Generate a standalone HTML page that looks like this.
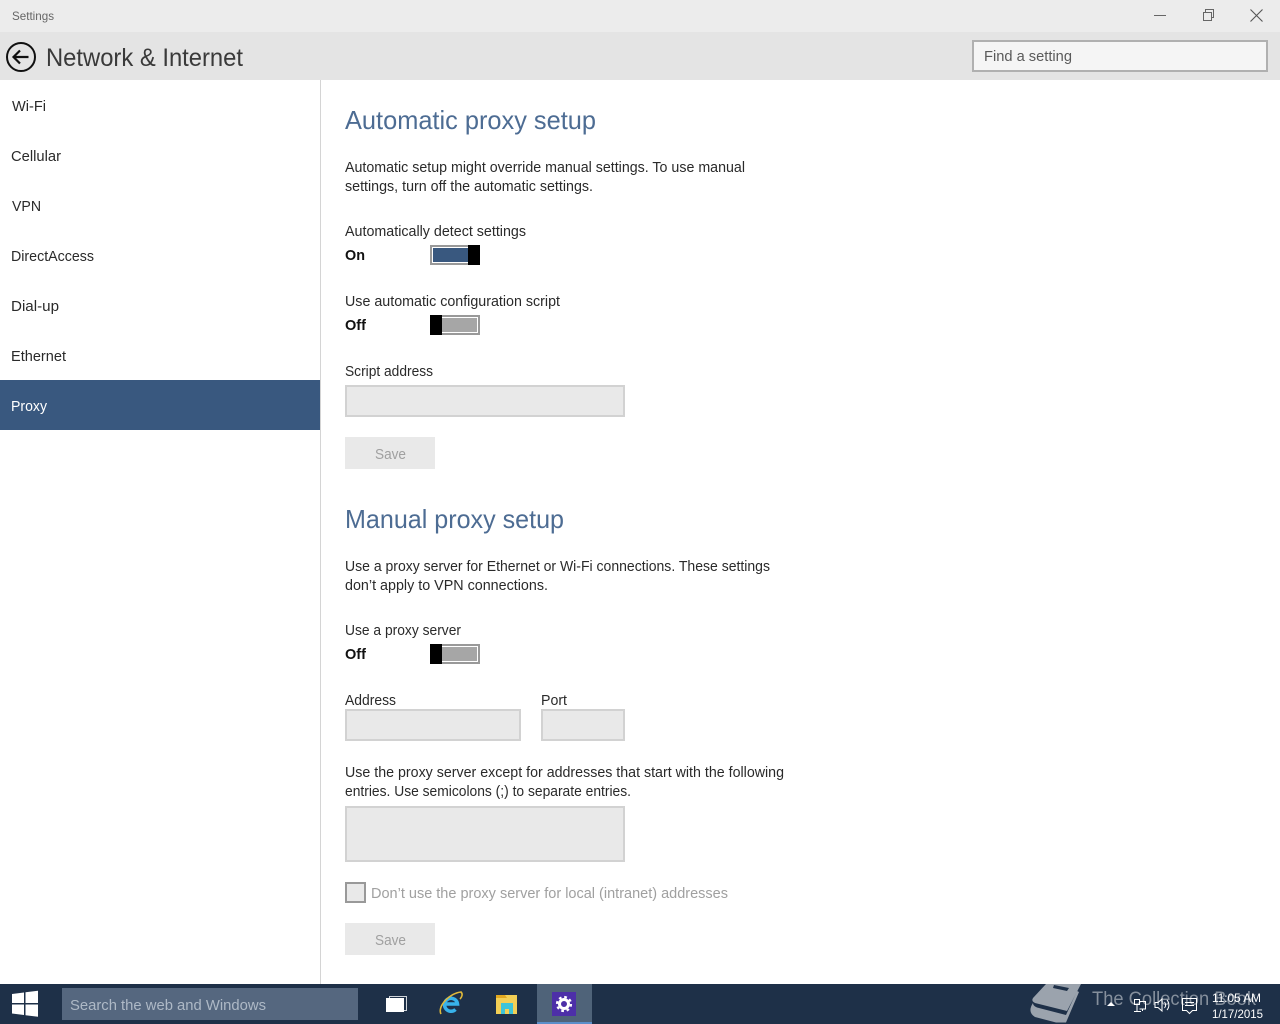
<!DOCTYPE html>
<html><head><meta charset="utf-8"><title>Settings</title>
<style>
html,body{margin:0;padding:0;background:#fff;width:1280px;height:1024px;overflow:hidden}
svg{display:block}
text{font-family:"Liberation Sans",sans-serif;font-size:15px;fill:#2a2a2a}
.h{font-size:26px;fill:#4d6c93}
.d{fill:#a0a0a0}
.b{font-weight:bold;fill:#111}
</style></head><body>
<svg width="1280" height="1024" viewBox="0 0 1280 1024" xmlns="http://www.w3.org/2000/svg">
<rect width="1280" height="1024" fill="#fff"/>
<rect width="1280" height="32" fill="#ececec"/>
<rect y="32" width="1280" height="48" fill="#e4e4e4"/>
<text x="12" y="20" style="font-size:12px;fill:#666" textLength="42" lengthAdjust="spacingAndGlyphs">Settings</text>
<path d="M1154 15.500h12" stroke="#666" fill="none"/>
<path d="M1203.500 12.500h8v8h-8zM1205.500 12.500v-3h8v8h-2" stroke="#666" fill="none"/>
<path d="M1250.500 9.500l12 12M1262.500 9.500l-12 12" stroke="#555" stroke-width="1.100" fill="none"/>
<circle cx="21" cy="57" r="14" fill="none" stroke="#111" stroke-width="2"/>
<path d="M13.500 57h15M20 50.500l-6.500 6.500 6.500 6.500" fill="none" stroke="#111" stroke-width="2.200"/>
<text x="46" y="66" style="font-size:25px;fill:#3a3a3a" textLength="197" lengthAdjust="spacingAndGlyphs">Network &amp; Internet</text>
<rect x="973" y="41" width="294" height="30" fill="#f5f5f5" stroke="#b0b0b0" stroke-width="2"/>
<text x="984" y="61" style="fill:#5a5a5a" textLength="88" lengthAdjust="spacingAndGlyphs">Find a setting</text>

<rect x="320" y="80" width="1" height="904" fill="#d4d4d4"/>
<rect y="380" width="320" height="50" fill="#39587f"/>
<text x="12" y="111" textLength="34" lengthAdjust="spacingAndGlyphs">Wi-Fi</text>
<text x="11" y="161" textLength="50" lengthAdjust="spacingAndGlyphs">Cellular</text>
<text x="12" y="211" textLength="29" lengthAdjust="spacingAndGlyphs">VPN</text>
<text x="11" y="261" textLength="83" lengthAdjust="spacingAndGlyphs">DirectAccess</text>
<text x="11" y="311" textLength="48" lengthAdjust="spacingAndGlyphs">Dial-up</text>
<text x="11" y="361" textLength="55" lengthAdjust="spacingAndGlyphs">Ethernet</text>
<text x="11" y="411" style="fill:#fff" textLength="36" lengthAdjust="spacingAndGlyphs">Proxy</text>

<text class="h" x="345" y="129" textLength="251" lengthAdjust="spacingAndGlyphs">Automatic proxy setup</text>
<text x="345" y="172" textLength="400" lengthAdjust="spacingAndGlyphs">Automatic setup might override manual settings. To use manual</text>
<text x="345" y="191" textLength="248" lengthAdjust="spacingAndGlyphs">settings, turn off the automatic settings.</text>
<text x="345" y="236" textLength="181" lengthAdjust="spacingAndGlyphs">Automatically detect settings</text>
<text class="b" x="345" y="260" textLength="20" lengthAdjust="spacingAndGlyphs">On</text>
<rect x="431" y="246" width="48" height="18" fill="#fff" stroke="#999" stroke-width="2"/>
<rect x="433" y="248" width="36" height="14" fill="#39587f"/>
<rect x="468" y="245" width="12" height="20" fill="#000"/>
<text x="345" y="306" textLength="215" lengthAdjust="spacingAndGlyphs">Use automatic configuration script</text>
<text class="b" x="345" y="330" textLength="21" lengthAdjust="spacingAndGlyphs">Off</text>
<rect x="431" y="316" width="48" height="18" fill="#fff" stroke="#999" stroke-width="2"/>
<rect x="441" y="318" width="36" height="14" fill="#a6a6a6"/>
<rect x="430" y="315" width="12" height="20" fill="#000"/>
<text x="345" y="376" textLength="88" lengthAdjust="spacingAndGlyphs">Script address</text>
<rect x="346" y="386" width="278" height="30" fill="#e9e9e9" stroke="#d2d2d2" stroke-width="2"/>
<rect x="345" y="437" width="90" height="32" fill="#e9e9e9"/>
<text class="d" x="375" y="459" textLength="31" lengthAdjust="spacingAndGlyphs">Save</text>

<text class="h" x="345" y="528" textLength="219" lengthAdjust="spacingAndGlyphs">Manual proxy setup</text>
<text x="345" y="571" textLength="425" lengthAdjust="spacingAndGlyphs">Use a proxy server for Ethernet or Wi-Fi connections. These settings</text>
<text x="345" y="590" textLength="203" lengthAdjust="spacingAndGlyphs">don’t apply to VPN connections.</text>
<text x="345" y="635" textLength="116" lengthAdjust="spacingAndGlyphs">Use a proxy server</text>
<text class="b" x="345" y="659" textLength="21" lengthAdjust="spacingAndGlyphs">Off</text>
<rect x="431" y="645" width="48" height="18" fill="#fff" stroke="#999" stroke-width="2"/>
<rect x="441" y="647" width="36" height="14" fill="#a6a6a6"/>
<rect x="430" y="644" width="12" height="20" fill="#000"/>
<text x="345" y="705" textLength="51" lengthAdjust="spacingAndGlyphs">Address</text>
<text x="541" y="705" textLength="26" lengthAdjust="spacingAndGlyphs">Port</text>
<rect x="346" y="710" width="174" height="30" fill="#e9e9e9" stroke="#d2d2d2" stroke-width="2"/>
<rect x="542" y="710" width="82" height="30" fill="#e9e9e9" stroke="#d2d2d2" stroke-width="2"/>
<text x="345" y="777" textLength="439" lengthAdjust="spacingAndGlyphs">Use the proxy server except for addresses that start with the following</text>
<text x="345" y="796" textLength="286" lengthAdjust="spacingAndGlyphs">entries. Use semicolons (;) to separate entries.</text>
<rect x="346" y="807" width="278" height="54" fill="#e9e9e9" stroke="#d2d2d2" stroke-width="2"/>
<rect x="346" y="883" width="19" height="19" fill="#e9e9e9" stroke="#999" stroke-width="2"/>
<text class="d" x="371" y="898" textLength="357" lengthAdjust="spacingAndGlyphs">Don’t use the proxy server for local (intranet) addresses</text>
<rect x="345" y="923" width="90" height="32" fill="#e9e9e9"/>
<text class="d" x="375" y="945" textLength="31" lengthAdjust="spacingAndGlyphs">Save</text>

<rect y="984" width="1280" height="40" fill="#1e3048"/>
<path d="M12 994l12-1.500v10.500h-12zM25.500 992.300l12.500-1.500v12.200h-12.500zM12 1004.500h12v10.500l-12-1.500zM25.500 1004.500h12.500v12.200l-12.500-1.500z" fill="#fff"/>
<rect x="62" y="988" width="296" height="32" fill="#55677f"/>
<text x="70" y="1010" style="fill:#aeb9c6" textLength="196" lengthAdjust="spacingAndGlyphs">Search the web and Windows</text>
<rect x="389.500" y="996.500" width="17" height="14" fill="none" stroke="#cfd4da"/>
<rect x="386" y="998" width="18" height="14" fill="#fff"/>
<path d="M445 1004H457.500A6.500 6.500 0 1 0 455.500 1009.500" fill="none" stroke="#38b2ea" stroke-width="3.500"/>
<path d="M441 1014C437 1006 450 993 461 992C463 994 462 997 460 999" fill="none" stroke="#e0b93a" stroke-width="1.600"/>
<path d="M496 995h21v19h-21z" fill="#f3cf55"/>
<path d="M496 995h9l2 3h-11z" fill="#e2a820"/>
<rect x="501" y="1003" width="12" height="11" fill="#3ec4d8"/>
<rect x="505" y="1009" width="4" height="5" fill="#f3cf55"/>
<rect x="537" y="984" width="55" height="40" fill="#4f6379"/>
<rect x="537" y="1022" width="55" height="2" fill="#5b8ec9"/>
<rect x="552" y="992" width="24" height="24" fill="#4d2fa8"/>
<circle cx="564" cy="1004" r="4.500" fill="none" stroke="#fff" stroke-width="3"/>
<circle cx="564" cy="1004" r="7" fill="none" stroke="#fff" stroke-width="2.200" stroke-dasharray="2.700 2.800"/>

<path d="M1046 984H1081L1067 1011L1035 1003Q1031 1001 1033 998Z" fill="#9ba3ad"/>
<path d="M1033 1003Q1027 1012 1035 1017L1056 1022.500H1066L1079 992L1077 991L1066 1015L1037 1007.500Q1033 1006 1033 1003Z" fill="#9ba3ad"/>
<path d="M1054 985L1069 988L1067 991L1053 988Z" fill="#1e3048"/>
<text x="1092" y="1005" style="font-size:19px;fill:#858f9c" textLength="164" lengthAdjust="spacingAndGlyphs">The Collection Book</text>
<path d="M1107 1006l4-4 4 4z" fill="#fff"/>
<g fill="none" stroke="#fff">
<rect x="1134.500" y="999.500" width="5" height="5"/>
<path d="M1137 1004.500v7M1134 1011.500h7M1140 1001.500h5.500v7.500h-6M1142.500 1009v2"/>
<path d="M1155 1002.500h3l4-3.500v12l-4-3.500h-3zM1164.500 1002c1.500 2 1.500 4 0 6M1167 1000c2.500 3 2.500 7 0 10"/>
<path d="M1182.500 998.500h14v12h-4l-3 3-3-3h-4zM1185 1002.500h9M1185 1005.500h9"/>
</g>
<text x="1212" y="1002" style="font-size:12px;fill:#fff" textLength="49" lengthAdjust="spacingAndGlyphs">11:05 AM</text>
<text x="1212" y="1018" style="font-size:12px;fill:#fff" textLength="51" lengthAdjust="spacingAndGlyphs">1/17/2015</text>
</svg>
</body></html>
